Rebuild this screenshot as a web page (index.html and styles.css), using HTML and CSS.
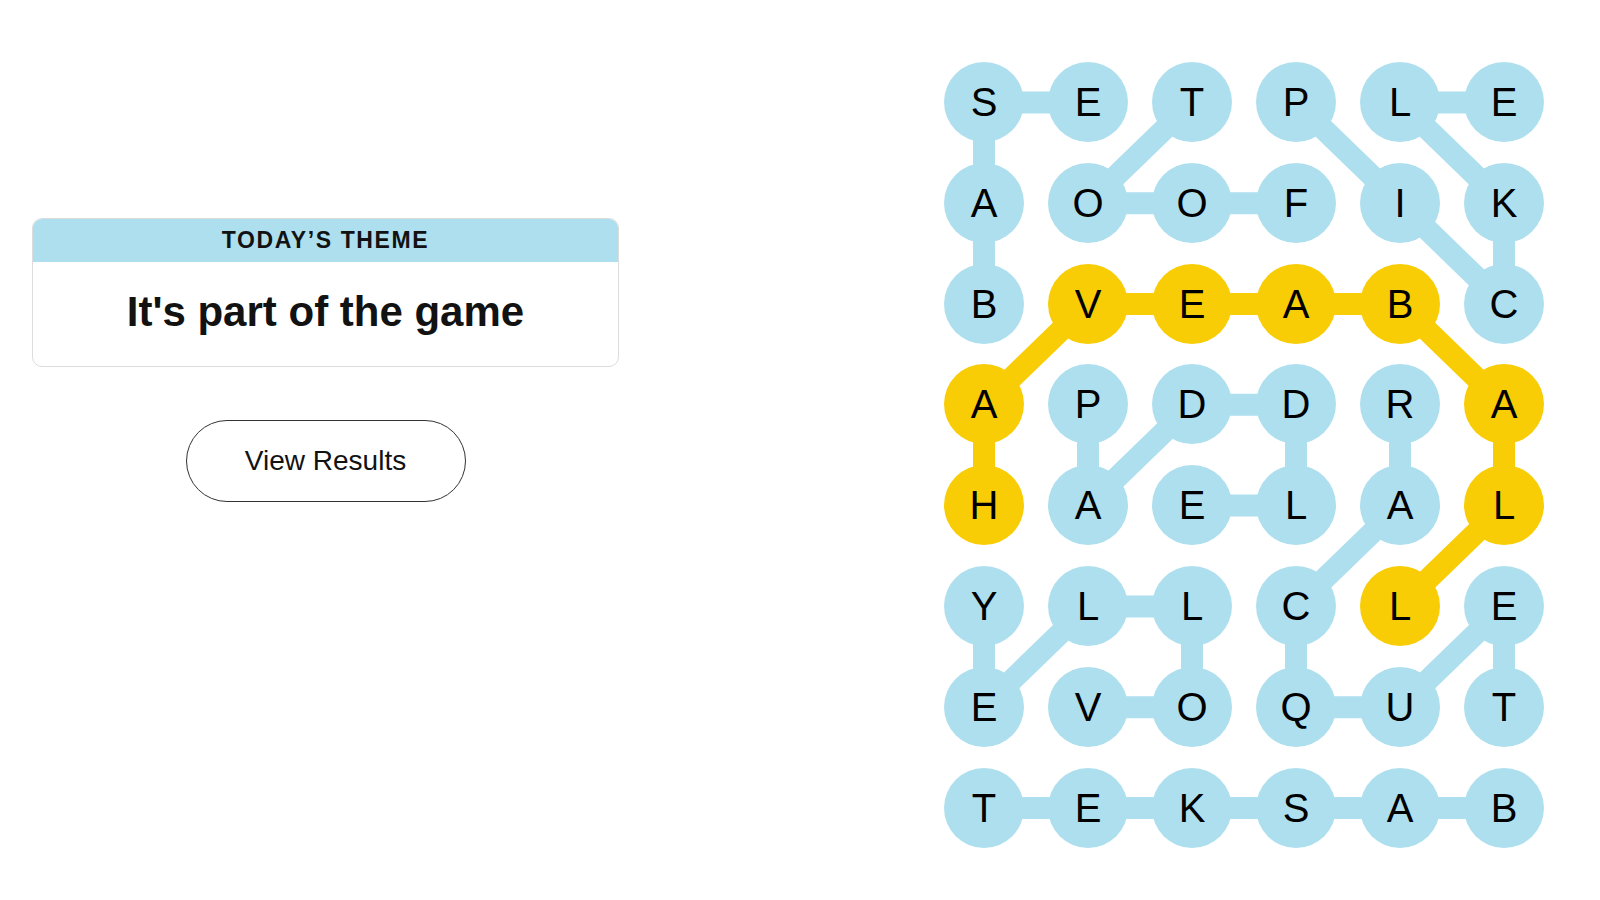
FILE: index.html
```html
<!DOCTYPE html>
<html lang="en">
<head>
    <meta charset="UTF-8">
    <meta name="viewport" content="width=device-width, initial-scale=1.0">
    <title>Strands</title>
    <link rel="stylesheet" href="styles.css">
</head>
<body>

<div class="page">
    <div class="sidebar">
        <div class="theme-card">
            <div class="theme-label">TODAY’S THEME</div>
            <div class="theme-text">It's part of the game</div>
        </div>
        <button class="results-btn">View Results</button>
    </div>

    <div class="board">
        <!-- found word paths, drawn under the letters -->
        <svg class="paths" width="624" height="806.4" viewBox="0 0 624 806.4">
            <g class="path-word">
                <polyline points="52,252 52,151.2 52,50.4 156,50.4"/>
                <polyline points="364,151.2 260,151.2 156,151.2 260,50.4"/>
                <polyline points="364,50.4 468,151.2 572,252 572,151.2 468,50.4 572,50.4"/>
                <polyline points="156,352.8 156,453.6 260,352.8 364,352.8 364,453.6 260,453.6"/>
                <polyline points="468,352.8 468,453.6 364,554.4 364,655.2 468,655.2 572,554.4 572,655.2"/>
                <polyline points="156,655.2 260,655.2 260,554.4 156,554.4 52,655.2 52,554.4"/>
                <polyline points="52,756 572,756"/>
            </g>
            <g class="path-spangram">
                <polyline points="52,453.6 52,352.8 156,252 260,252 364,252 468,252 572,352.8 572,453.6 468,554.4"/>
            </g>
        </svg>

        <button class="letter">S</button>
        <button class="letter">E</button>
        <button class="letter">T</button>
        <button class="letter">P</button>
        <button class="letter">L</button>
        <button class="letter">E</button>

        <button class="letter">A</button>
        <button class="letter">O</button>
        <button class="letter">O</button>
        <button class="letter">F</button>
        <button class="letter">I</button>
        <button class="letter">K</button>

        <button class="letter">B</button>
        <button class="letter spangram">V</button>
        <button class="letter spangram">E</button>
        <button class="letter spangram">A</button>
        <button class="letter spangram">B</button>
        <button class="letter">C</button>

        <button class="letter spangram">A</button>
        <button class="letter">P</button>
        <button class="letter">D</button>
        <button class="letter">D</button>
        <button class="letter">R</button>
        <button class="letter spangram">A</button>

        <button class="letter spangram">H</button>
        <button class="letter">A</button>
        <button class="letter">E</button>
        <button class="letter">L</button>
        <button class="letter">A</button>
        <button class="letter spangram">L</button>

        <button class="letter">Y</button>
        <button class="letter">L</button>
        <button class="letter">L</button>
        <button class="letter">C</button>
        <button class="letter spangram">L</button>
        <button class="letter">E</button>

        <button class="letter">E</button>
        <button class="letter">V</button>
        <button class="letter">O</button>
        <button class="letter">Q</button>
        <button class="letter">U</button>
        <button class="letter">T</button>

        <button class="letter">T</button>
        <button class="letter">E</button>
        <button class="letter">K</button>
        <button class="letter">S</button>
        <button class="letter">A</button>
        <button class="letter">B</button>
    </div>
</div>

</body>
</html>
```

FILE: styles.css
```css
body {
    font-family: "Liberation Sans", Arial, sans-serif;
    background-color: #fff;
    color: #121212;
    margin: 0;
    padding: 0;
}
.page {
    display: flex;
    align-items: flex-start;
    gap: 313px;
    padding: 51.6px 0 0 32px;
    height: 900px;
    box-sizing: border-box;
}
.sidebar {
    width: 587px;
    margin-top: 166px;
    display: flex;
    flex-direction: column;
    align-items: center;
}
.theme-card {
    width: 100%;
    border: 1px solid #dcdcdc;
    border-radius: 10px;
    overflow: hidden;
    box-sizing: border-box;
}
.theme-label {
    height: 43px;
    display: flex;
    align-items: center;
    justify-content: center;
    background-color: #aedfee;
    font-size: 23px;
    font-weight: 700;
    letter-spacing: 1.6px;
}
.theme-text {
    height: 104px;
    display: flex;
    align-items: center;
    justify-content: center;
    font-size: 42px;
    font-weight: 700;
    padding-bottom: 4px;
    box-sizing: border-box;
}
.results-btn {
    margin-top: 53px;
    width: 280px;
    height: 82px;
    border: 1.5px solid #333;
    border-radius: 41px;
    background: #fff;
    font-family: inherit;
    font-size: 28px;
    color: #121212;
    cursor: pointer;
}
.board {
    position: relative;
    display: grid;
    grid-template-columns: repeat(6, 104px);
    grid-template-rows: repeat(8, 100.8px);
    place-items: center;
}
.paths {
    position: absolute;
    top: 0;
    left: 0;
}
.paths polyline {
    fill: none;
    stroke-width: 22;
    stroke-linejoin: round;
}
.path-word polyline {
    stroke: #aedfee;
}
.path-spangram polyline {
    stroke: #f8cd05;
}
.letter {
    position: relative;
    width: 80px;
    height: 80px;
    border: none;
    border-radius: 50%;
    padding: 0;
    background-color: #aedfee;
    font-family: inherit;
    font-size: 40px;
    color: #000;
    line-height: 80px;
    cursor: pointer;
}
.letter.spangram {
    background-color: #f8cd05;
}
```
